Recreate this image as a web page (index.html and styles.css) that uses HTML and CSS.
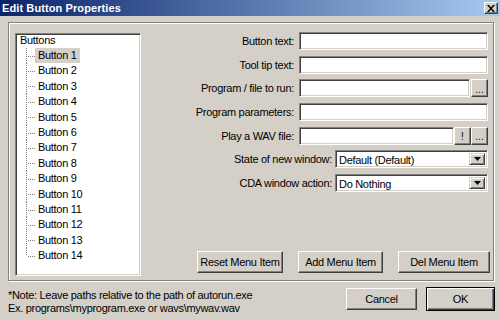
FILE: index.html
```html
<!DOCTYPE html>
<html lang="en">
<head>
	<meta charset="UTF-8">
	<title>Edit Button Properties</title>
	<link rel="stylesheet" href="styles.css">
</head>
<body>

	<div class="window">
		<div class="titlebar">
			<span class="title">Edit Button Properties</span>
			<span class="close">
				<svg width="8" height="7" viewBox="0 0 8 7">
					<path d="M0 0 L2 0 L4 2.5 L6 0 L8 0 L5 3.5 L8 7 L6 7 L4 4.5 L2 7 L0 7 L3 3.5 Z" fill="#000"/>
				</svg>
			</span>
		</div>

		<div class="client">
			<div class="group">
				<div class="tree">
					<div class="tree-root">Buttons</div>
					<ul class="tree-children">
						<li><span class="node selected">Button 1</span></li>
						<li><span class="node">Button 2</span></li>
						<li><span class="node">Button 3</span></li>
						<li><span class="node">Button 4</span></li>
						<li><span class="node">Button 5</span></li>
						<li><span class="node">Button 6</span></li>
						<li><span class="node">Button 7</span></li>
						<li><span class="node">Button 8</span></li>
						<li><span class="node">Button 9</span></li>
						<li><span class="node">Button 10</span></li>
						<li><span class="node">Button 11</span></li>
						<li><span class="node">Button 12</span></li>
						<li><span class="node">Button 13</span></li>
						<li><span class="node">Button 14</span></li>
					</ul>
				</div>

				<div class="fields">
					<div class="row">
						<label>Button text:</label>
						<span class="input w-full"></span>
					</div>
					<div class="row">
						<label>Tool tip text:</label>
						<span class="input w-full"></span>
					</div>
					<div class="row">
						<label>Program / file to run:</label>
						<span class="input w-browse"></span>
						<span class="btn small">...</span>
					</div>
					<div class="row">
						<label>Program parameters:</label>
						<span class="input w-full"></span>
					</div>
					<div class="row">
						<label>Play a WAV file:</label>
						<span class="input w-wav"></span>
						<span class="btn small">!</span>
						<span class="btn small">...</span>
					</div>
					<div class="row row-select">
						<label>State of new window:</label>
						<span class="select">
							<span class="select-text">Default (Default)</span>
							<span class="select-arrow">
								<svg width="7" height="4" viewBox="0 0 7 4"><polygon points="0,0 7,0 3.5,4" fill="#000"/></svg>
							</span>
						</span>
					</div>
					<div class="row row-select">
						<label>CDA window action:</label>
						<span class="select">
							<span class="select-text">Do Nothing</span>
							<span class="select-arrow">
								<svg width="7" height="4" viewBox="0 0 7 4"><polygon points="0,0 7,0 3.5,4" fill="#000"/></svg>
							</span>
						</span>
					</div>

					<div class="actions">
						<span class="btn reset">Reset Menu Item</span>
						<span class="btn add">Add Menu Item</span>
						<span class="btn del">Del Menu Item</span>
					</div>
				</div>
			</div>

			<div class="footer">
				<p class="note">*Note: Leave paths relative to the path of autorun.exe<br>Ex. programs\myprogram.exe or wavs\mywav.wav</p>
				<span class="btn cancel">Cancel</span>
				<span class="btn ok">OK</span>
			</div>
		</div>
	</div>

</body>
</html>
```

FILE: styles.css
```css
body {
	margin: 0;
	background: #d4d0c8;
	font-family: "Liberation Sans", Arial, sans-serif;
	font-size: 11px;
	letter-spacing: -0.3px;
	color: #000;
}
.window {
	width: 500px;
	height: 320px;
	overflow: hidden;
}

/* title bar */
.titlebar {
	height: 16px;
	display: flex;
	align-items: center;
	padding: 0 2px 0 2px;
	background: linear-gradient(to right, #0a246a, #a6caf0);
}
.title {
	color: #fff;
	font: bold 11px "Liberation Sans", Arial, sans-serif;
	letter-spacing: 0.1px;
}
.close {
	margin-left: auto;
	width: 14px;
	height: 12px;
	box-sizing: border-box;
	display: flex;
	align-items: center;
	justify-content: center;
	background: #d4d0c8;
	border: 1px solid;
	border-color: #fff #404040 #404040 #fff;
	box-shadow: inset -1px -1px #808080;
}

.client {
	padding: 6px 5px 0 8px;
}

/* etched group box */
.group {
	width: 486px;
	height: 259px;
	box-sizing: border-box;
	display: flex;
	padding: 10px 3px 4px 6px;
	border: 1px solid #808080;
	box-shadow: inset 1px 1px #fff, 1px 1px #fff;
}

/* tree view */
.tree {
	width: 126px;
	height: 243px;
	box-sizing: border-box;
	flex-shrink: 0;
	padding-left: 4px;
	background: #fff;
	border: 1px solid;
	border-color: #808080 #fff #fff #808080;
	box-shadow: inset 1px 1px #404040, inset -1px -1px #d4d0c8;
}
.tree-root {
	height: 15px;
	line-height: 15px;
	margin-top: -1px;
}
.tree-children {
	list-style: none;
	margin: 0 0 0 6px;
	padding: 0;
}
.tree-children li {
	position: relative;
	height: 15.4px;
	line-height: 15.4px;
	padding-left: 9px;
}
.tree-children li::before {
	content: "";
	position: absolute;
	left: 0;
	top: 0;
	width: 1px;
	height: 100%;
	background: linear-gradient(to bottom, #808080 50%, transparent 50%);
	background-size: 1px 2px;
}
.tree-children li:last-child::before {
	height: 50%;
}
.tree-children li::after {
	content: "";
	position: absolute;
	left: 1px;
	top: 50%;
	width: 8px;
	height: 1px;
	background: linear-gradient(to right, transparent 50%, #808080 50%);
	background-size: 2px 1px;
}
.node {
	display: inline-block;
	padding: 0 3px;
}
.node.selected {
	background: #d4d0c8;
}

/* form fields */
.fields {
	flex: 1;
	display: flex;
	flex-direction: column;
	align-items: flex-end;
	margin-top: -1px;
}
.row {
	display: flex;
	align-items: center;
	gap: 5px;
	height: 18px;
	margin-right: 2px;
}
.row + .row {
	margin-top: 5.7px;
}
.row-select {
	gap: 3px;
}
.input {
	height: 18px;
	box-sizing: border-box;
	background: #fff;
	border: 1px solid;
	border-color: #808080 #fff #fff #808080;
	box-shadow: inset 1px 1px #404040, inset -1px -1px #d4d0c8;
}
.w-full {
	width: 189px;
}
.w-browse {
	width: 171px;
	margin-right: -4px;
}
.w-wav {
	width: 155px;
	margin-right: -5px;
}

.btn {
	display: flex;
	align-items: center;
	justify-content: center;
	box-sizing: border-box;
	white-space: nowrap;
	background: #d4d0c8;
	border: 1px solid;
	border-color: #fff #404040 #404040 #fff;
	box-shadow: inset -1px -1px #808080;
}
.btn.small {
	width: 17px;
	height: 18px;
	margin-left: -5px;
	font-size: 10px;
	letter-spacing: 0;
	padding-top: 2px;
}
.row .input + .btn.small {
	margin-left: 0;
}

.select {
	width: 153px;
	height: 18px;
	box-sizing: border-box;
	display: flex;
	padding: 2px;
	background: #fff;
	border: 1px solid;
	border-color: #808080 #fff #fff #808080;
	box-shadow: inset 1px 1px #404040, inset -1px -1px #d4d0c8;
}
.select-text {
	flex: 1;
	line-height: 14px;
	padding-left: 1px;
}
.select-arrow {
	width: 16px;
	display: flex;
	align-items: center;
	justify-content: center;
	box-sizing: border-box;
	background: #d4d0c8;
	border: 1px solid;
	border-color: #d4d0c8 #404040 #404040 #d4d0c8;
	box-shadow: inset 1px 1px #fff, inset -1px -1px #808080;
}

.actions {
	margin-top: auto;
	margin-bottom: 3px;
	display: flex;
	gap: 15px;
}
.actions .btn {
	height: 22px;
}
.reset {
	width: 86px;
}
.add {
	width: 85px;
}
.del {
	width: 92px;
}

/* footer */
.footer {
	display: flex;
	align-items: center;
	margin-top: 6px;
	height: 24px;
}
.note {
	flex: 1;
	margin: 0;
	align-self: flex-start;
	padding-top: 2px;
	line-height: 13px;
	white-space: nowrap;
}
.cancel {
	width: 71px;
	height: 22px;
	margin-right: 9px;
}
.ok {
	width: 69px;
	height: 24px;
	border: 1px solid #000;
	box-shadow: inset 1px 1px #fff, inset -1px -1px #404040, inset -2px -2px #808080;
}
```
